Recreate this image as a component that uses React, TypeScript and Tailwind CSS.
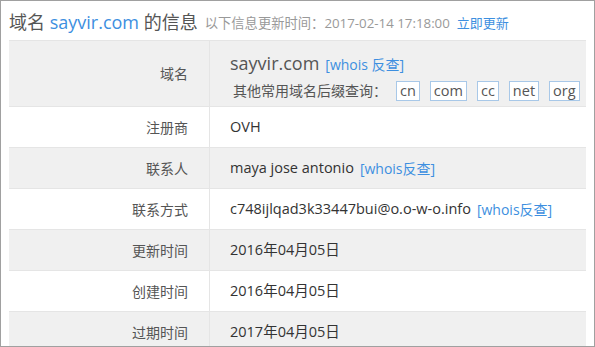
import React from "react";

const FONT = "font-['Open_Sans','Noto_Sans_CJK_SC',sans-serif]";

const ROWS: { label: string; value: string; whois?: boolean }[] = [
	{ label: "注册商", value: "OVH" },
	{ label: "联系人", value: "maya jose antonio", whois: true },
	{ label: "联系方式", value: "c748ijlqad3k33447bui@o.o-w-o.info", whois: true },
	{ label: "更新时间", value: "2016年04月05日" },
	{ label: "创建时间", value: "2016年04月05日" },
	{ label: "过期时间", value: "2017年04月05日" },
];

const SUFFIXES = ["cn", "com", "cc", "net", "org"];

export default function App() {
	return (
		<div className={`w-[595px] h-[347px] overflow-hidden bg-white border border-[#a0a0a0] ${FONT}`}>
			{/* TITLE */}
			<div className="h-[39px] px-[8px] flex items-end pb-[7px] whitespace-nowrap">
				<span className="text-[18px] leading-[22px] text-[#555]">
					域名 <span className="text-[#3d8fe0]">sayvir.com</span> 的信息
				</span>
				<span className="ml-[7px] text-[13.3px] leading-[19px] text-[#999]">
					以下信息更新时间：2017-02-14 17:18:00
				</span>
				<a className="ml-[7px] text-[13px] leading-[19px] text-[#3d8fe0]">立即更新</a>
			</div>

			{/* TABLE */}
			<div className="mx-[8px] border-t border-[#e5e5e5] text-[14px]">
				<div className="flex h-[66px] bg-[#f0f0f0] border-b border-[#e5e5e5]">
					<div className="w-[201px] border-r border-[#e5e5e5] flex items-center justify-end pr-[21px] text-[#555]">
						域名
					</div>
					<div className="flex-1 pl-[20px] pt-[10px]">
						<div className="flex items-baseline whitespace-nowrap">
							<span className="text-[18px] leading-[24px] text-[#555]">sayvir.com</span>
							<a className="ml-[6px] text-[14px] text-[#3d8fe0]">[whois 反查]</a>
						</div>
						<div className="mt-[5px] flex items-center text-[14px] text-[#555] whitespace-nowrap">
							<span className="ml-[3px]">其他常用域名后缀查询：</span>
							<div className="ml-[9px] flex gap-[10px]">
								{SUFFIXES.map((s) => (
									<span
										key={s}
										className="h-[20px] px-[3px] flex items-center bg-white border border-[#a8c8e8] text-[14.5px] text-[#555]"
									>
										{s}
									</span>
								))}
							</div>
						</div>
					</div>
				</div>

				{ROWS.map((row, i) => (
					<div
						key={row.label}
						className={`flex h-[41px] border-b border-[#e5e5e5] ${i % 2 === 1 ? "bg-[#f0f0f0]" : "bg-white"}`}
					>
						<div className="w-[201px] border-r border-[#e5e5e5] flex items-center justify-end pr-[21px] text-[#555]">
							{row.label}
						</div>
						<div className="flex-1 pl-[20px] flex items-center whitespace-nowrap text-[14.5px] text-[#333]">
							{row.value}
							{row.whois && <a className="ml-[6px] text-[14px] text-[#3d8fe0]">[whois反查]</a>}
						</div>
					</div>
				))}
			</div>
		</div>
	);
}
